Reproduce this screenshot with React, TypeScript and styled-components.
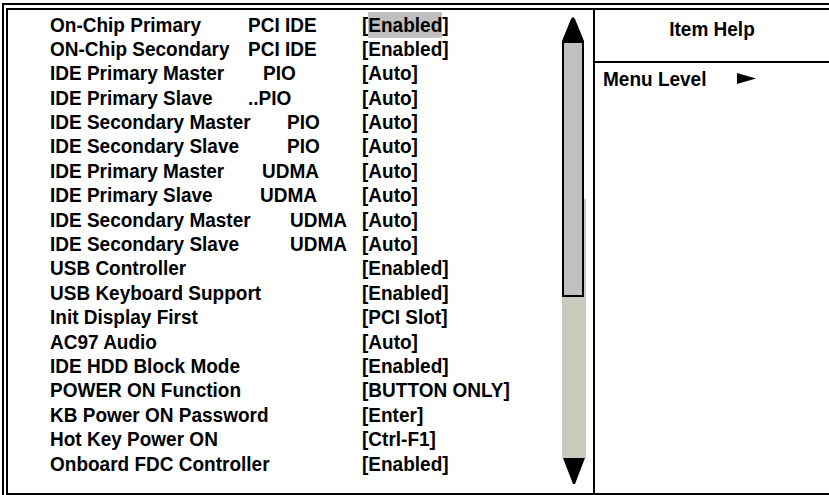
import React from "react";
import styled, { createGlobalStyle } from "styled-components";

const GlobalStyle = createGlobalStyle`
  html, body { margin: 0; padding: 0; background: #fff; }
  body { font-family: "Liberation Sans", Arial, Helvetica, sans-serif; color: #000; }
`;

const Screen = styled.div`
  width: 829px;
  height: 495px;
  box-sizing: border-box;
  padding: 3px 0 0 2px;
  overflow: hidden;
  background: #fff;
`;

const OuterFrame = styled.div`
  height: 100%;
  box-sizing: border-box;
  border-top: 2px solid #000;
  border-left: 2px solid #000;
  padding: 3px 0 0 2px;
`;

const InnerFrame = styled.div`
  height: 100%;
  box-sizing: border-box;
  border-top: 2px solid #000;
  border-left: 2px solid #000;
  border-bottom: 2px solid #000;
  display: flex;
`;

const Main = styled.div`
  width: 585px;
  display: grid;
  grid-template-columns: 554px 24px;
  align-items: start;
`;

const List = styled.div`
  padding: 3.5px 0 0 42px;
`;

const Row = styled.div`
  display: grid;
  grid-template-columns: 198px 114px auto;
  height: 24.4px;
  line-height: 24.4px;
  font-size: 19px;
  font-weight: bold;
  white-space: nowrap;
  transform: scaleY(1.08);
`;

const Label = styled.span``;

const Mid = styled.span<{ $shift: number }>`
  padding-left: ${(p) => p.$shift}px;
`;

const Value = styled.span``;

const Highlight = styled.span`
  background: #c0c0c0;
  padding: 2px 0 1px;
`;

const Scrollbar = styled.div`
  display: flex;
  flex-direction: column;
  padding-top: 7px;
`;

const Track = styled.div`
  width: 24px;
  height: 417px;
  background: linear-gradient(to bottom, #fff 158px, #cbcbbd 158px);
`;

const Thumb = styled.div`
  width: 22px;
  height: 256px;
  box-sizing: border-box;
  border: 2px solid #000;
  background: #c0c0c0;
`;

const ArrowSvg = styled.svg<{ $offset?: number }>`
  display: block;
  margin-left: ${(p) => p.$offset ?? 0}px;
`;

const Help = styled.div`
  flex: 1;
  border-left: 2px solid #000;
  font-size: 19px;
  font-weight: bold;
`;

const HelpHeader = styled.div`
  height: 53px;
  box-sizing: border-box;
  border-bottom: 2px solid #000;
  padding-top: 7px;
  line-height: 23px;
  text-align: center;
`;

const HelpTitle = styled.div`
  transform: scaleY(1.08);
`;

const HelpRow = styled.div`
  display: flex;
  align-items: center;
  padding: 4px 0 0 8px;
  line-height: 23px;
`;

const HelpLabel = styled.span`
  width: 134px;
  transform: scaleY(1.08);
`;

type Item = { label: string; mid?: string; shift?: number; value: string; hl?: boolean };

const items: Item[] = [
  { label: "On-Chip Primary", mid: "PCI IDE", shift: 0, value: "Enabled", hl: true },
  { label: "ON-Chip Secondary", mid: "PCI IDE", shift: 0, value: "Enabled" },
  { label: "IDE Primary Master", mid: "PIO", shift: 15, value: "Auto" },
  { label: "IDE Primary Slave", mid: "..PIO", shift: 0, value: "Auto" },
  { label: "IDE Secondary Master", mid: "PIO", shift: 39, value: "Auto" },
  { label: "IDE Secondary Slave", mid: "PIO", shift: 39, value: "Auto" },
  { label: "IDE Primary Master", mid: "UDMA", shift: 14, value: "Auto" },
  { label: "IDE Primary Slave", mid: "UDMA", shift: 12, value: "Auto" },
  { label: "IDE Secondary Master", mid: "UDMA", shift: 42, value: "Auto" },
  { label: "IDE Secondary Slave", mid: "UDMA", shift: 42, value: "Auto" },
  { label: "USB Controller", value: "Enabled" },
  { label: "USB Keyboard Support", value: "Enabled" },
  { label: "Init Display First", value: "PCI Slot" },
  { label: "AC97 Audio", value: "Auto" },
  { label: "IDE HDD Block Mode", value: "Enabled" },
  { label: "POWER ON Function", value: "BUTTON ONLY" },
  { label: "KB Power ON Password", value: "Enter" },
  { label: "Hot Key Power ON", value: "Ctrl-F1" },
  { label: "Onboard FDC Controller", value: "Enabled" },
];

export default function App() {
  return (
    <>
      <GlobalStyle />
      <Screen>
        <OuterFrame>
          <InnerFrame>
            <Main>
              <List>
                {items.map((it, i) => (
                  <Row key={i}>
                    <Label>{it.label}</Label>
                    <Mid $shift={it.shift ?? 0}>{it.mid ?? ""}</Mid>
                    <Value>
                      [{it.hl ? <Highlight>{it.value}</Highlight> : it.value}]
                    </Value>
                  </Row>
                ))}
              </List>
              <Scrollbar>
                <ArrowSvg width="22" height="24" viewBox="0 0 22 24">
                  <path d="M11 0 L13 2 L22 24 L0 24 L9 2 Z" fill="#000" />
                </ArrowSvg>
                <Track>
                  <Thumb />
                </Track>
                <ArrowSvg width="22" height="26" viewBox="0 0 22 26" $offset={1}>
                  <path d="M0 0 L22 0 L12 26 L10 26 Z" fill="#000" />
                </ArrowSvg>
              </Scrollbar>
            </Main>
            <Help>
              <HelpHeader>
                <HelpTitle>Item Help</HelpTitle>
              </HelpHeader>
              <HelpRow>
                <HelpLabel>Menu Level</HelpLabel>
                <svg width="19" height="11" viewBox="0 0 19 11">
                  <path d="M0 0 L19 5.5 L0 11 Z" fill="#000" />
                </svg>
              </HelpRow>
            </Help>
          </InnerFrame>
        </OuterFrame>
      </Screen>
    </>
  );
}
